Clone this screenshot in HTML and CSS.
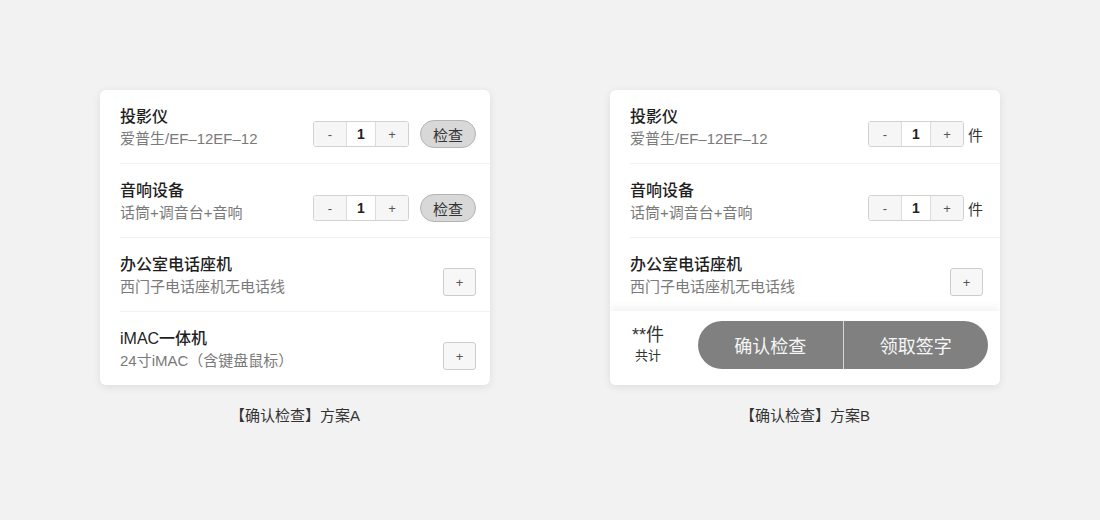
FILE: index.html
```html
<!DOCTYPE html>
<html lang="zh-CN">
<head>
<meta charset="utf-8">
<title>确认检查</title>
<link rel="stylesheet" href="styles.css">
</head>
<body>
<main class="board">
  <section class="variant">
    <div class="card card-a">
      <div class="row">
        <div class="info">
          <div class="title">投影仪</div>
          <div class="sub">爱普生/EF–12EF–12</div>
        </div>
        <div class="controls">
          <div class="stepper"><span class="step-btn">-</span><span class="step-val">1</span><span class="step-btn">+</span></div>
          <span class="check-btn">检查</span>
        </div>
      </div>
      <div class="row">
        <div class="info">
          <div class="title">音响设备</div>
          <div class="sub">话筒+调音台+音响</div>
        </div>
        <div class="controls">
          <div class="stepper"><span class="step-btn">-</span><span class="step-val">1</span><span class="step-btn">+</span></div>
          <span class="check-btn">检查</span>
        </div>
      </div>
      <div class="row">
        <div class="info">
          <div class="title">办公室电话座机</div>
          <div class="sub">西门子电话座机无电话线</div>
        </div>
        <div class="controls">
          <span class="add-btn">+</span>
        </div>
      </div>
      <div class="row">
        <div class="info">
          <div class="title">iMAC一体机</div>
          <div class="sub">24寸iMAC（含键盘鼠标）</div>
        </div>
        <div class="controls">
          <span class="add-btn">+</span>
        </div>
      </div>
    </div>
    <div class="caption">【确认检查】方案A</div>
  </section>

  <section class="variant">
    <div class="card card-b">
      <div class="row">
        <div class="info">
          <div class="title">投影仪</div>
          <div class="sub">爱普生/EF–12EF–12</div>
        </div>
        <div class="controls">
          <div class="stepper"><span class="step-btn">-</span><span class="step-val">1</span><span class="step-btn">+</span></div>
          <span class="unit">件</span>
        </div>
      </div>
      <div class="row">
        <div class="info">
          <div class="title">音响设备</div>
          <div class="sub">话筒+调音台+音响</div>
        </div>
        <div class="controls">
          <div class="stepper"><span class="step-btn">-</span><span class="step-val">1</span><span class="step-btn">+</span></div>
          <span class="unit">件</span>
        </div>
      </div>
      <div class="row row-last">
        <div class="info">
          <div class="title">办公室电话座机</div>
          <div class="sub">西门子电话座机无电话线</div>
        </div>
        <div class="controls">
          <span class="add-btn">+</span>
        </div>
      </div>
      <div class="footer">
        <div class="total">
          <div class="total-num">**件</div>
          <div class="total-label">共计</div>
        </div>
        <div class="actions">
          <span class="action">确认检查</span>
          <span class="action">领取签字</span>
        </div>
      </div>
    </div>
    <div class="caption">【确认检查】方案B</div>
  </section>
</main>
</body>
</html>
```

FILE: styles.css
```css
* {
  box-sizing: border-box;
}

html, body {
  margin: 0;
  padding: 0;
  background: #f2f2f2;
}

body {
  font-family: "Liberation Sans", "Noto Sans CJK SC", sans-serif;
  color: #222;
  width: 1100px;
  height: 520px;
  overflow: hidden;
}

.board {
  display: flex;
  gap: 120px;
  padding: 90px 0 0 100px;
}

.variant {
  width: 390px;
  display: flex;
  flex-direction: column;
}

.card {
  background: #fff;
  border-radius: 6px;
  box-shadow: 0 2px 8px rgba(0, 0, 0, 0.09);
  overflow: hidden;
  height: 295px;
}

.row {
  display: flex;
  align-items: flex-end;
  height: 74px;
  margin-left: 20px;
  padding: 15px 14px 15px 0;
  border-bottom: 1px solid #f2f2f2;
}

.card-b .row {
  padding-right: 17px;
}

.card-a .row:last-child,
.card-b .row-last {
  border-bottom: none;
  height: 73px;
}

.info {
  flex: 1;
  min-width: 0;
  margin-bottom: -2px;
}

.title {
  font-size: 16px;
  line-height: 22px;
  font-weight: 500;
  color: #1f1f1f;
}

.sub {
  font-size: 15px;
  line-height: 22px;
  color: #7a7a7a;
}

.controls {
  display: flex;
  align-items: center;
  height: 28px;
}

.stepper {
  display: flex;
  height: 26px;
  border: 1px solid #d2d2d2;
  border-radius: 3px;
  overflow: hidden;
}

.step-btn {
  width: 32px;
  display: flex;
  align-items: center;
  justify-content: center;
  background: #f6f6f6;
  color: #555;
  font-size: 13px;
}

.step-val {
  width: 30px;
  display: flex;
  align-items: center;
  justify-content: center;
  background: #fff;
  border-left: 1px solid #dcdcdc;
  border-right: 1px solid #dcdcdc;
  font-size: 14px;
  font-weight: 700;
  color: #222;
}

.check-btn {
  margin-left: 11px;
  width: 56px;
  height: 28px;
  border-radius: 14px;
  border: 1px solid #b4b4b4;
  background: #d8d8d8;
  display: flex;
  align-items: center;
  justify-content: center;
  font-size: 15px;
  color: #333;
}

.unit {
  margin-left: 4px;
  font-size: 15px;
  color: #333;
}

.add-btn {
  width: 33px;
  height: 28px;
  border: 1px solid #cdcdcd;
  border-radius: 3px;
  background: #f7f7f7;
  display: flex;
  align-items: center;
  justify-content: center;
  font-size: 13px;
  color: #555;
}

.footer {
  display: flex;
  align-items: center;
  height: 75px;
  padding: 0 12px 7px 20px;
  background: #fff;
  box-shadow: 0 -4px 8px rgba(0, 0, 0, 0.05);
}

.total {
  width: 36px;
  text-align: center;
  color: #333;
}

.total-num {
  font-size: 18px;
  line-height: 22px;
}

.total-label {
  font-size: 13px;
  line-height: 20px;
}

.actions {
  margin-left: auto;
  display: flex;
  width: 290px;
  height: 48px;
  border-radius: 24px;
  overflow: hidden;
  background: #808080;
}

.action {
  flex: 1;
  display: flex;
  align-items: center;
  justify-content: center;
  font-size: 18px;
  color: #f6f6f6;
}

.action + .action {
  border-left: 1px solid #d6d6d6;
}

.caption {
  margin-top: 21px;
  text-align: center;
  font-size: 15px;
  line-height: 20px;
  color: #333;
}
```
